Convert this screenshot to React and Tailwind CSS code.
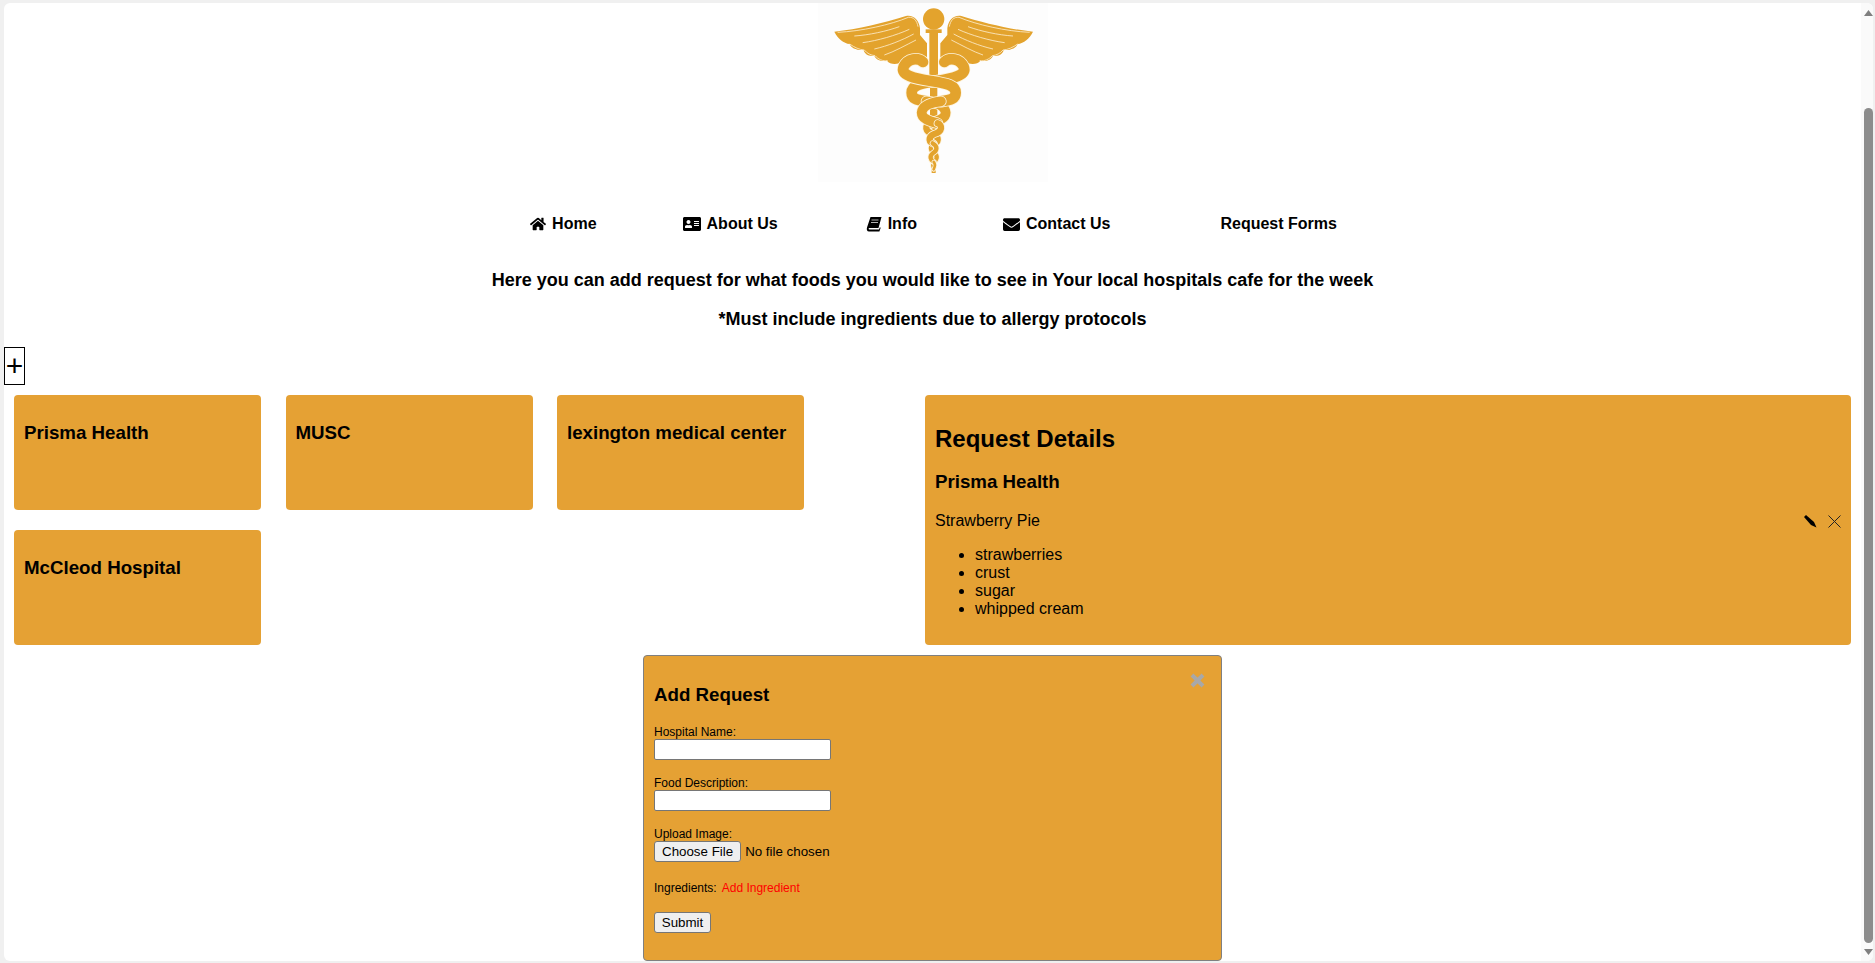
import { FaHome, FaAddressCard, FaEnvelope } from 'react-icons/fa';

const hospitals = ['Prisma Health', 'MUSC', 'lexington medical center', 'McCleod Hospital'];
const ingredients = ['strawberries', 'crust', 'sugar', 'whipped cream'];

function Band({ d, w }) {
  return (
    <>
      <path d={d} fill="none" stroke="#fdf3dc" strokeWidth={w + 5} strokeLinecap="round" />
      <path d={d} fill="none" stroke="#e3a32d" strokeWidth={w} strokeLinecap="round" />
    </>
  );
}

function Snake() {
  return (
    <>
      <Band w={32} d="M396 186 C380 172 350 175 338 200 C328 226 370 236 420 243 C470 250 494 258 494 278 C494 296 480 300 450 304" />
      <Band w={29} d="M450 304 C415 308 394 318 392 338 C392 358 420 364 440 370" />
      <Band w={19} d="M440 370 C455 375 455 395 430 402 C415 408 410 422 425 430" />
      <Band w={13} d="M425 430 C440 438 440 452 425 460 C415 468 418 480 428 486" />
      <Band w={8} d="M428 486 C434 492 432 500 428 508" />
    </>
  );
}

function Logo() {
  const wing = (
    <>
      <path
        d="M130 95 C200 88 280 68 345 48 C368 44 384 60 387 85 L387 105 L408 130 L408 180 C395 168 370 168 350 178 L325 190 C310 194 295 192 288 182 C272 186 255 180 250 167 C233 170 220 162 218 150 C198 152 180 144 176 132 C158 130 140 115 130 95 Z"
        fill="#e3a32d"
      />
      <g fill="none" stroke="#fdeccb" strokeWidth="2.5">
        <path d="M140 97 C210 94 300 74 352 52 C368 50 378 62 381 80" />
        <path d="M190 108 C235 105 285 94 325 80" />
        <path d="M215 128 C260 122 315 106 355 88" />
        <path d="M250 147 C290 138 335 120 368 102" />
        <path d="M280 165 C310 155 345 135 375 120" />
        <path d="M176 132 C190 142 205 149 220 150 M220 150 C228 160 240 166 252 167 M252 167 C262 178 275 184 290 182" />
      </g>
    </>
  );
  return (
    <svg width="230" height="179" viewBox="81 9 690 537" className="bg-[#fdfdfd] block">
      <circle cx="428" cy="57" r="32" fill="#e3a32d" />
      {wing}
      <g transform="matrix(-1 0 0 1 856 0)">{wing}</g>
      <rect x="404" y="88" width="48" height="11" fill="#e3a32d" />
      <rect x="415" y="99" width="26" height="130" fill="#e3a32d" />
      <rect x="417" y="229" width="22" height="130" fill="#e3a32d" />
      <rect x="422" y="359" width="12" height="160" fill="#e3a32d" />
      <g transform="matrix(-1 0 0 1 856 0)">
        <Snake />
      </g>
      <Snake />
    </svg>
  );
}

function BookIcon() {
  return (
    <svg width="16" height="16" viewBox="0 0 16 16">
      <path d="M4.5 1 H15.5 L12.5 12 H3.5 C2.3 12 2.3 13.6 3.5 13.6 H13 L14 11 L14.6 12 L13.4 15.5 H3 C1 15.5 0.4 13.5 1 11.5 Z" fill="#000" />
      <path d="M5.5 4 H12.5 M5 6.5 H12" stroke="#fff" strokeWidth="0.7" />
    </svg>
  );
}

function NavLink({ icon, label, className = '' }) {
  return (
    <a className={`flex items-center gap-[6px] font-bold text-[16px] text-black ${className}`}>
      {icon}
      {label}
    </a>
  );
}

function Scrollbar() {
  return (
    <div className="w-[12px] shrink-0 bg-[#fafafa] flex flex-col items-end">
      <svg width="9" height="17" viewBox="0 0 9 17" className="shrink-0">
        <path d="M4.5 7 L9 13 L0 13 Z" fill="#7f7f7f" />
      </svg>
      <div className="w-[9px] h-[835px] mt-[88px] rounded-[5px] bg-[#8c8c8c]" />
      <svg width="9" height="14" viewBox="0 0 9 14" className="shrink-0 mt-[3px]">
        <path d="M0 3 L9 3 L4.5 9 Z" fill="#7f7f7f" />
      </svg>
    </div>
  );
}

function AddRequestModal() {
  return (
    <div className="relative w-[579px] h-[306px] ml-[639px] mt-[10px] shrink-0 rounded-[4px] border border-[#808080] bg-[#e5a134] px-[10px] text-[12px] leading-[14px] text-black">
      <button className="absolute right-[16px] top-[17px] text-[#a8a8a8]">
        <svg width="15" height="15" viewBox="0 0 15 15" className="block">
          <path d="M2 2 L13 13 M13 2 L2 13" stroke="currentColor" strokeWidth="4" />
        </svg>
      </button>
      <h3 className="font-bold text-[18.72px] leading-[22px] pt-[28px]">Add Request</h3>
      <label className="block mt-[19px]">Hospital Name:</label>
      <input type="text" className="block w-[177px] h-[21px] bg-white border border-[#767676] rounded-[2px]" />
      <label className="block mt-[16px]">Food Description:</label>
      <input type="text" className="block w-[177px] h-[21px] bg-white border border-[#767676] rounded-[2px]" />
      <label className="block mt-[16px]">Upload Image:</label>
      <input
        type="file"
        className="block h-[21px] w-[200px] text-[13.333px] leading-[15px] file:h-[21px] file:bg-[#efefef] file:border file:border-[#767676] file:rounded-[3px] file:px-[7px] file:mr-[4px]"
      />
      <div className="flex gap-[5px] mt-[19px]">
        <span>Ingredients:</span>
        <span className="text-[#ff0000]">Add Ingredient</span>
      </div>
      <button className="block mt-[17px] h-[21px] w-[57px] bg-[#efefef] border border-[#767676] rounded-[3px] text-[13.333px]">
        Submit
      </button>
    </div>
  );
}

export default function App() {
  return (
    <div className="h-[963px] overflow-hidden bg-[#f0f0f0] pt-[3px] pb-[2px] pl-[4px] pr-[2px] font-['Liberation_Sans',Arial,sans-serif] text-black">
      <div className="flex h-full rounded-[6px] overflow-hidden bg-white">
        <div className="flex-1 min-w-0 flex flex-col">
          {/* Logo */}
          <div className="flex justify-center">
            <Logo />
          </div>

          {/* Nav */}
          <nav className="flex justify-center items-center gap-[86px] h-[20px] mt-[32px] pl-[2px]">
            <NavLink icon={<FaHome size={16} />} label="Home" />
            <NavLink icon={<FaAddressCard size={18} />} label="About Us" />
            <NavLink icon={<BookIcon />} label="Info" className="ml-[2px]" />
            <NavLink icon={<FaEnvelope size={17} />} label="Contact Us" />
            <NavLink label="Request Forms" className="ml-[24px]" />
          </nav>

          {/* Intro */}
          <h3 className="mt-[35px] text-center font-bold text-[18px] leading-[22px]">
            Here you can add request for what foods you would like to see in Your local hospitals cafe for the week
          </h3>
          <h3 className="mt-[17px] text-center font-bold text-[18px] leading-[22px]">
            *Must include ingredients due to allergy protocols
          </h3>

          <button className="self-start mt-[17px] w-[21px] h-[38px] border border-black text-[30px] leading-[34px]">+</button>

          {/* Cards + details */}
          <div className="flex mt-[10px] pl-[10px]">
            <div className="grid grid-cols-[247px_247px_247px] gap-x-[24.5px] gap-y-[20px] w-[790px] auto-rows-[115px]">
              {hospitals.map((h) => (
                <div key={h} className="rounded-[4px] bg-[#e5a134] px-[10px] pt-[27px] font-bold text-[18.72px] leading-[22px]">
                  {h}
                </div>
              ))}
            </div>
            <div className="ml-[121px] w-[926px] h-[250px] rounded-[4px] bg-[#e5a134] p-[10px] text-[16px] leading-[18px]">
              <h2 className="font-bold text-[24px] leading-[28px] mt-[20px]">Request Details</h2>
              <h3 className="font-bold text-[18.72px] leading-[22px] mt-[18px]">Prisma Health</h3>
              <div className="flex items-center justify-between mt-[19px]">
                <span>Strawberry Pie</span>
                <span className="flex items-center gap-[11px]">
                  <svg width="13" height="13" viewBox="0 0 13 13">
                    <path d="M0 2 L2 0 L10 7 L12.5 12.5 L7 10 Z" fill="#000" />
                  </svg>
                  <svg width="13" height="13" viewBox="0 0 13 13">
                    <path d="M0.5 0.5 L12.5 12.5 M12.5 0.5 L0.5 12.5" stroke="#222" strokeWidth="1" fill="none" />
                  </svg>
                </span>
              </div>
              <ul className="list-disc pl-[40px] mt-[16px]">
                {ingredients.map((i) => (
                  <li key={i}>{i}</li>
                ))}
              </ul>
            </div>
          </div>

          <AddRequestModal />
        </div>
        <Scrollbar />
      </div>
    </div>
  );
}
